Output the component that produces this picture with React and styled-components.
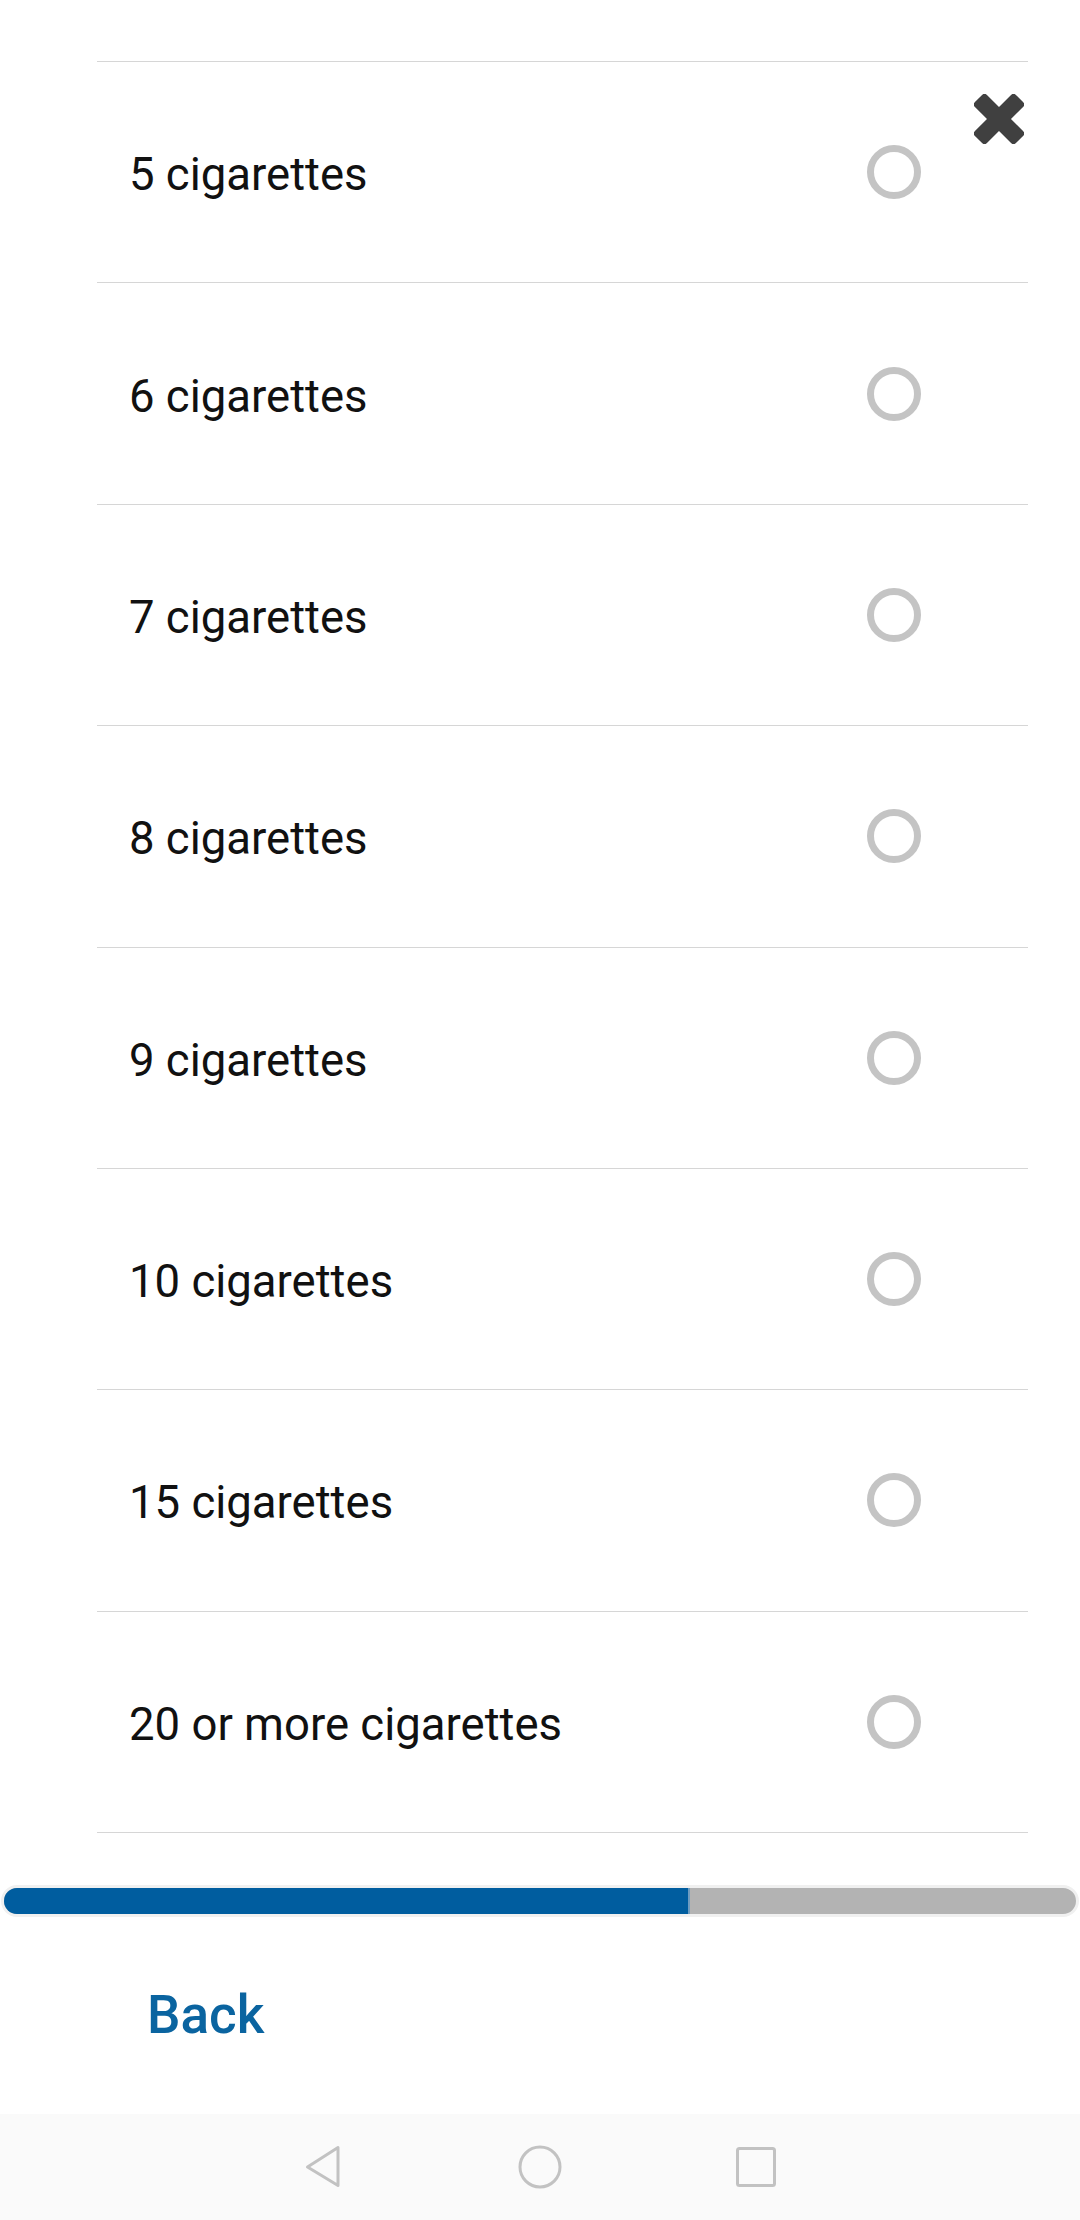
import React from "react";
import styled, { createGlobalStyle } from "styled-components";

const GlobalStyle = createGlobalStyle`
  html, body {
    margin: 0;
    padding: 0;
    background: #ffffff;
  }
  body {
    font-family: Roboto, "Noto Sans", "Liberation Sans", sans-serif;
    -webkit-font-smoothing: antialiased;
  }
  * { box-sizing: border-box; }
`;

const Page = styled.div`
  width: 1080px;
  height: 2220px;
  display: flex;
  flex-direction: column;
  background: #ffffff;
  overflow: hidden;
`;

const Content = styled.main`
  position: relative;
  padding-top: 61px;
`;

const CloseButton = styled.button`
  position: absolute;
  top: 94px;
  right: 56px;
  width: 50px;
  height: 50px;
  padding: 0;
  border: none;
  background: transparent;
  display: flex;
  align-items: center;
  justify-content: center;
  cursor: pointer;
`;

const OptionList = styled.ul`
  list-style: none;
  margin: 0 52px 0 97px;
  padding: 0;
  border-top: 1px solid #d6d6d6;
`;

const OptionRow = styled.li`
  height: 221.375px;
  display: flex;
  align-items: center;
  justify-content: space-between;
  padding: 0 107px 0 32px;
  border-bottom: 1px solid #d6d6d6;
`;

const OptionLabel = styled.span`
  font-family: Roboto, "Noto Sans", "Liberation Sans", sans-serif;
  font-size: 45.5px;
  font-weight: 400;
  color: #111111;
  padding-top: 5px;
`;

const Radio = styled.span`
  width: 54px;
  height: 54px;
  border-radius: 50%;
  border: 7px solid ${(p) => (p.$checked ? "#005d9f" : "#c4c4c4")};
  background: #ffffff;
  flex-shrink: 0;
`;

const ProgressTrack = styled.div`
  margin: 52px 1px 0 1px;
  height: 32px;
  border: 3px solid #f0f0f0;
  border-radius: 16px;
  background: #b3b3b3;
  overflow: hidden;
  display: flex;
`;

const ProgressFill = styled.div`
  height: 100%;
  background: #005d9f;
  border-right: 2px solid #6f9cc0;
`;

const Footer = styled.div`
  height: 197px;
  display: flex;
  align-items: center;
  padding-left: 147px;
`;

const BackButton = styled.button`
  border: none;
  background: transparent;
  padding: 0;
  font-family: Roboto, "Noto Sans", "Liberation Sans", sans-serif;
  font-size: 53px;
  font-weight: 500;
  color: #0a64a0;
  cursor: pointer;
  line-height: 1;
`;

const NavBar = styled.nav`
  height: 106px;
  background: #fafafa;
  display: flex;
  align-items: center;
  justify-content: center;
  gap: 168px;
`;

const NavIcon = styled.span`
  width: 48px;
  height: 48px;
  display: flex;
  align-items: center;
  justify-content: center;
`;

const options = [
  "5 cigarettes",
  "6 cigarettes",
  "7 cigarettes",
  "8 cigarettes",
  "9 cigarettes",
  "10 cigarettes",
  "15 cigarettes",
  "20 or more cigarettes",
];

const CloseIcon = () => (
  <svg width="50" height="50" viewBox="0 0 50 50">
    <g transform="rotate(45 25 25)" fill="#404040">
      <rect x="16.5" y="-4" width="17" height="58" rx="3.5" />
      <rect x="-4" y="16.5" width="58" height="17" rx="3.5" />
    </g>
  </svg>
);

export default function App() {
  const progress = 64;
  return (
    <>
      <GlobalStyle />
      <Page>
        <Content>
          <CloseButton aria-label="Close">
            <CloseIcon />
          </CloseButton>
          <OptionList>
            {options.map((o) => (
              <OptionRow key={o}>
                <OptionLabel>{o}</OptionLabel>
                <Radio />
              </OptionRow>
            ))}
          </OptionList>
        </Content>
        <ProgressTrack>
          <ProgressFill style={{ width: `${progress}%` }} />
        </ProgressTrack>
        <Footer>
          <BackButton>Back</BackButton>
        </Footer>
        <NavBar>
          <NavIcon>
            <svg width="40" height="46" viewBox="0 0 40 46">
              <path
                d="M34 3.5 L34 41.5 L3.5 23 Z"
                fill="none"
                stroke="#c2c2c2"
                strokeWidth="3"
                strokeLinejoin="round"
              />
            </svg>
          </NavIcon>
          <NavIcon>
            <svg width="46" height="46" viewBox="0 0 46 46">
              <circle cx="23" cy="23" r="20" fill="none" stroke="#c2c2c2" strokeWidth="3" />
            </svg>
          </NavIcon>
          <NavIcon>
            <svg width="42" height="42" viewBox="0 0 42 42">
              <rect x="2.5" y="2.5" width="37" height="37" rx="2" fill="none" stroke="#c2c2c2" strokeWidth="3" />
            </svg>
          </NavIcon>
        </NavBar>
      </Page>
    </>
  );
}
